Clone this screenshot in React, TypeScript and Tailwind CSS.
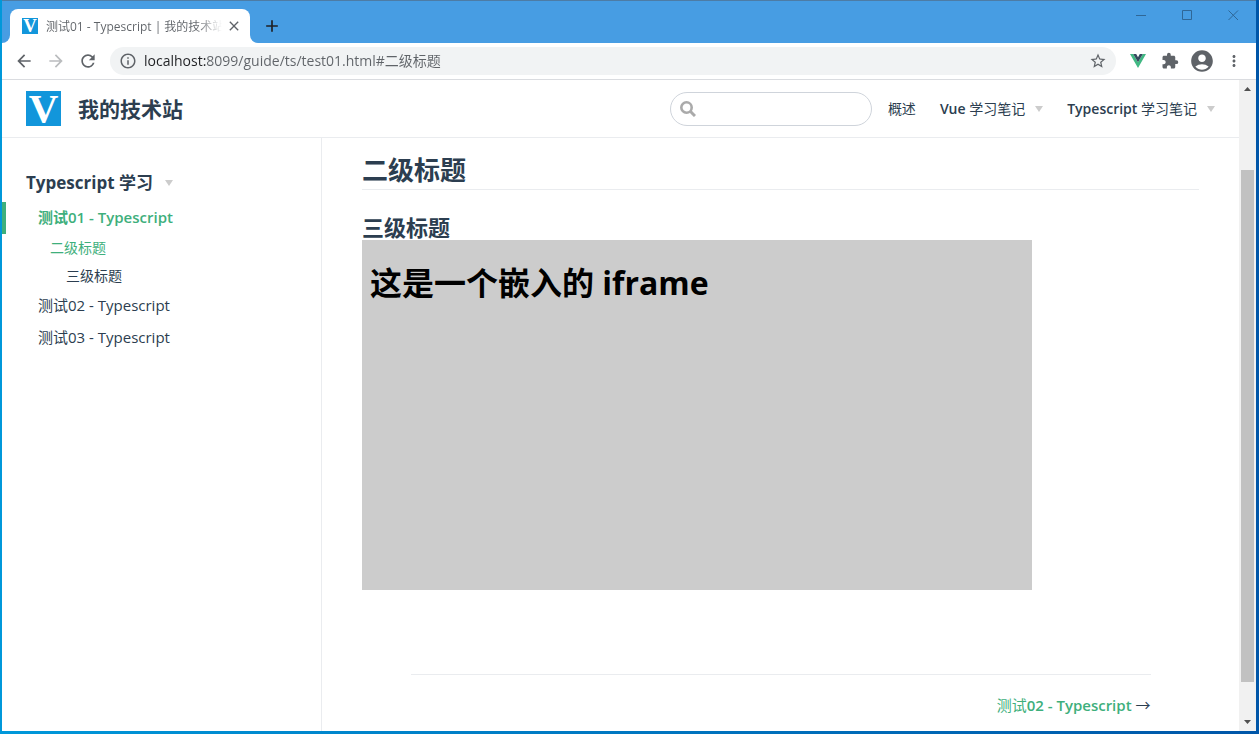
import React from "react";
import {
  MdAccountCircle,
  MdAdd,
  MdArrowBack,
  MdArrowForward,
  MdClose,
  MdExtension,
  MdInfoOutline,
  MdMoreVert,
  MdRefresh,
  MdStarBorder,
} from "react-icons/md";

function SiteLogo({ className }: { className: string }) {
  return (
    <svg viewBox="0 0 35 35" className={`overflow-visible ${className}`} aria-hidden="true">
      <rect width="35" height="35" fill="#1296db" />
      <text
        x="17.5"
        y="31"
        textAnchor="middle"
        fontFamily="Liberation Serif, serif"
        fontWeight="700"
        fontSize="41"
        fill="#fff"
      >
        V
      </text>
    </svg>
  );
}

function VueIcon() {
  return (
    <svg viewBox="0 0 16 14" className="h-3.5 w-4" aria-hidden="true">
      <path d="M0 0h3.2L8 8.3 12.800 0H16L8 14z" fill="#41b883" />
      <path d="M3.200 0h3L8 3.200 9.800 0h3L8 8.300z" fill="#35495e" />
    </svg>
  );
}

function Caret() {
  return (
    <svg viewBox="0 0 8 6" className="h-1.5 w-2 shrink-0" aria-hidden="true">
      <path d="M0 0h8L4 6z" fill="#ccc" />
    </svg>
  );
}

function TabStrip() {
  return (
    <div className="flex h-[43px] items-end border-t border-[#4d7ca5] bg-[#479de3]">
      <div className="flex h-[34px] w-2 bg-white">
        <div className="w-full rounded-br-lg bg-[#479de3]" />
      </div>
      <div className="flex h-[34px] w-60 items-center rounded-t-lg bg-white pr-2 pl-3">
        <SiteLogo className="size-4 shrink-0" />
        <span className="ml-2 w-[176px] overflow-hidden bg-linear-to-r from-[#5f6368] from-85% to-white bg-clip-text pt-0.5 text-xs whitespace-nowrap text-transparent">
          测试01 - Typescript | 我的技术站
        </span>
        <button aria-label="关闭标签页" className="ml-1 text-[#5f6368]">
          <MdClose className="size-4" />
        </button>
      </div>
      <div className="flex h-[34px] w-2 bg-white">
        <div className="w-full rounded-bl-lg bg-[#479de3]" />
      </div>
      <button aria-label="新标签页" className="ml-1 flex h-[34px] items-center text-[#202124]">
        <MdAdd className="size-5" />
      </button>
      <div className="ml-auto flex self-start pt-1 text-[#2f6797]">
        <button aria-label="最小化" className="flex h-5 w-[46px] items-center justify-center">
          <svg viewBox="0 0 11 11" className="size-[11px]" stroke="currentColor" fill="none">
            <path d="M0 5.500h10" />
          </svg>
        </button>
        <button aria-label="最大化" className="flex h-5 w-[46px] items-center justify-center">
          <svg viewBox="0 0 11 11" className="size-[11px]" stroke="currentColor" fill="none">
            <path d="M.5.500h9v9h-9z" />
          </svg>
        </button>
        <button aria-label="关闭" className="flex h-5 w-[46px] items-center justify-center">
          <svg viewBox="0 0 11 11" className="size-[11px]" stroke="currentColor" fill="none">
            <path d="M.5.500l9.500 9.500M10 .5L.5 10" />
          </svg>
        </button>
      </div>
    </div>
  );
}

function Toolbar() {
  return (
    <div className="flex h-[37px] items-center border-b border-[#dadce0] bg-white pr-[13px] pl-3 text-[#5f6368]">
      <div className="flex gap-3">
        <button aria-label="后退">
          <MdArrowBack className="size-5" />
        </button>
        <button aria-label="前进" className="text-[#babcbe]">
          <MdArrowForward className="size-5" />
        </button>
        <button aria-label="重新加载">
          <MdRefresh className="size-5" />
        </button>
      </div>
      <div className="ml-3 flex h-7 flex-1 items-center rounded-full bg-[#f1f3f4] px-[9px]">
        <MdInfoOutline className="size-[18px] shrink-0" />
        <input
          aria-label="地址"
          defaultValue="localhost:8099/guide/ts/test01.html#二级标题"
          className="ml-[7px] min-w-0 flex-1 bg-linear-to-r from-[#202124] from-[62px] to-[#5f6368] to-[62px] bg-clip-text text-sm text-transparent outline-none"
        />
        <button aria-label="添加书签">
          <MdStarBorder className="size-[18px]" />
        </button>
      </div>
      <div className="ml-3.5 flex items-center">
        <button aria-label="Vue.js devtools">
          <VueIcon />
        </button>
        <button aria-label="扩展程序" className="ml-[15px]">
          <MdExtension className="size-[18px]" />
        </button>
        <button aria-label="用户" className="ml-2.5">
          <MdAccountCircle className="size-[26px]" />
        </button>
        <button aria-label="菜单" className="ml-2.5">
          <MdMoreVert className="size-[18px]" />
        </button>
      </div>
    </div>
  );
}

function SiteHeader() {
  return (
    <header className="flex h-[58px] items-center border-b border-[#eaecef] bg-white px-6">
      <a href="#" className="flex items-center gap-[17px]">
        <SiteLogo className="size-[35px]" />
        <span className="pt-0.5 text-[21px] font-bold">我的技术站</span>
      </a>
      <label className="ml-auto flex h-[34px] w-[202px] items-center rounded-full border border-[#cfd4db] px-[9px]">
        <svg viewBox="0 0 16 16" className="size-4" fill="none" stroke="#aaa" aria-hidden="true">
          <circle cx="6.500" cy="6.500" r="5.200" strokeWidth="2.600" />
          <path d="M10.500 10.500l4.500 4.500" strokeWidth="3" />
        </svg>
        <input aria-label="搜索" className="ml-2 min-w-0 flex-1 text-sm outline-none" />
      </label>
      <nav className="ml-4 flex items-center gap-6 text-sm">
        <a href="#">概述</a>
        <button className="flex items-center gap-2.5">
          <span>
            <span className="font-semibold">Vue</span> 学习笔记
          </span>
          <Caret />
        </button>
        <button className="flex items-center gap-2.5">
          <span>
            <span className="font-semibold">Typescript</span> 学习笔记
          </span>
          <Caret />
        </button>
      </nav>
    </header>
  );
}

function Sidebar() {
  return (
    <aside className="w-80 shrink-0 border-r border-[#eaecef] pt-8">
      <button className="flex h-[26px] items-center gap-3 px-6 text-[17px] font-bold">
        Typescript 学习
        <Caret />
      </button>
      <ul className="mt-1.5 text-[15px]">
        <li>
          <a
            href="#"
            className="flex h-8 items-center border-l-4 border-[#3eaf7c] pb-0.5 pl-8 font-semibold text-[#3eaf7c]"
          >
            测试01 - Typescript
          </a>
          <ul className="text-sm">
            <li>
              <a href="#" className="flex h-7 items-center pl-12 text-[#3eaf7c]">
                二级标题
              </a>
            </li>
            <li>
              <a href="#" className="flex h-7 items-center pl-16">
                三级标题
              </a>
            </li>
          </ul>
        </li>
        <li>
          <a href="#" className="flex h-8 items-center pb-0.5 pl-9">
            测试02 - Typescript
          </a>
        </li>
        <li>
          <a href="#" className="flex h-8 items-center pb-0.5 pl-9">
            测试03 - Typescript
          </a>
        </li>
      </ul>
    </aside>
  );
}

function Article() {
  return (
    <main className="min-w-0 flex-1 px-10 pt-3.5">
      <h2 className="border-b border-[#eaecef] text-[26px] leading-[37px] font-bold">二级标题</h2>
      <h3 className="mt-6 text-[22px] leading-[26px] font-bold">三级标题</h3>
      <section className="h-[350px] max-w-[670px] bg-[#ccc] px-2 pt-5 text-black">
        <h1 className="text-[32px] leading-[46px] font-bold">这是一个嵌入的 iframe</h1>
      </section>
      <footer className="mx-auto mt-[84px] max-w-[740px] border-t border-[#eaecef] pt-[18px] text-right text-[15px] leading-6">
        <a href="#" className="text-[#3eaf7c]">
          测试<span className="font-semibold">02 - Typescript</span>
        </a>{" "}
        →
      </footer>
    </main>
  );
}

function Scrollbar() {
  return (
    <div className="flex w-[17px] shrink-0 flex-col items-center bg-[#f1f1f1]" aria-hidden="true">
      <svg viewBox="0 0 17 17" className="size-[17px]">
        <path d="M5 11h7L8.500 7z" fill="#505050" />
      </svg>
      <div className="mt-[73px] w-[13px] flex-1 bg-[#c1c1c1]" />
      <svg viewBox="0 0 17 17" className="mt-8 size-[17px]">
        <path d="M5 6h7L8.500 10z" fill="#505050" />
      </svg>
    </div>
  );
}

export default function App() {
  return (
    <div className="flex h-screen flex-col bg-linear-to-r from-[#0098da] to-[#0056a8] pr-[3px] pb-[3px] pl-0.5 font-['Open_Sans','Noto_Sans_CJK_SC',sans-serif] text-[#2c3e50]">
      <TabStrip />
      <Toolbar />
      <div className="flex min-h-0 flex-1 bg-white">
        <div className="flex min-w-0 flex-1 flex-col">
          <SiteHeader />
          <div className="flex min-h-0 flex-1">
            <Sidebar />
            <Article />
          </div>
        </div>
        <Scrollbar />
      </div>
    </div>
  );
}
